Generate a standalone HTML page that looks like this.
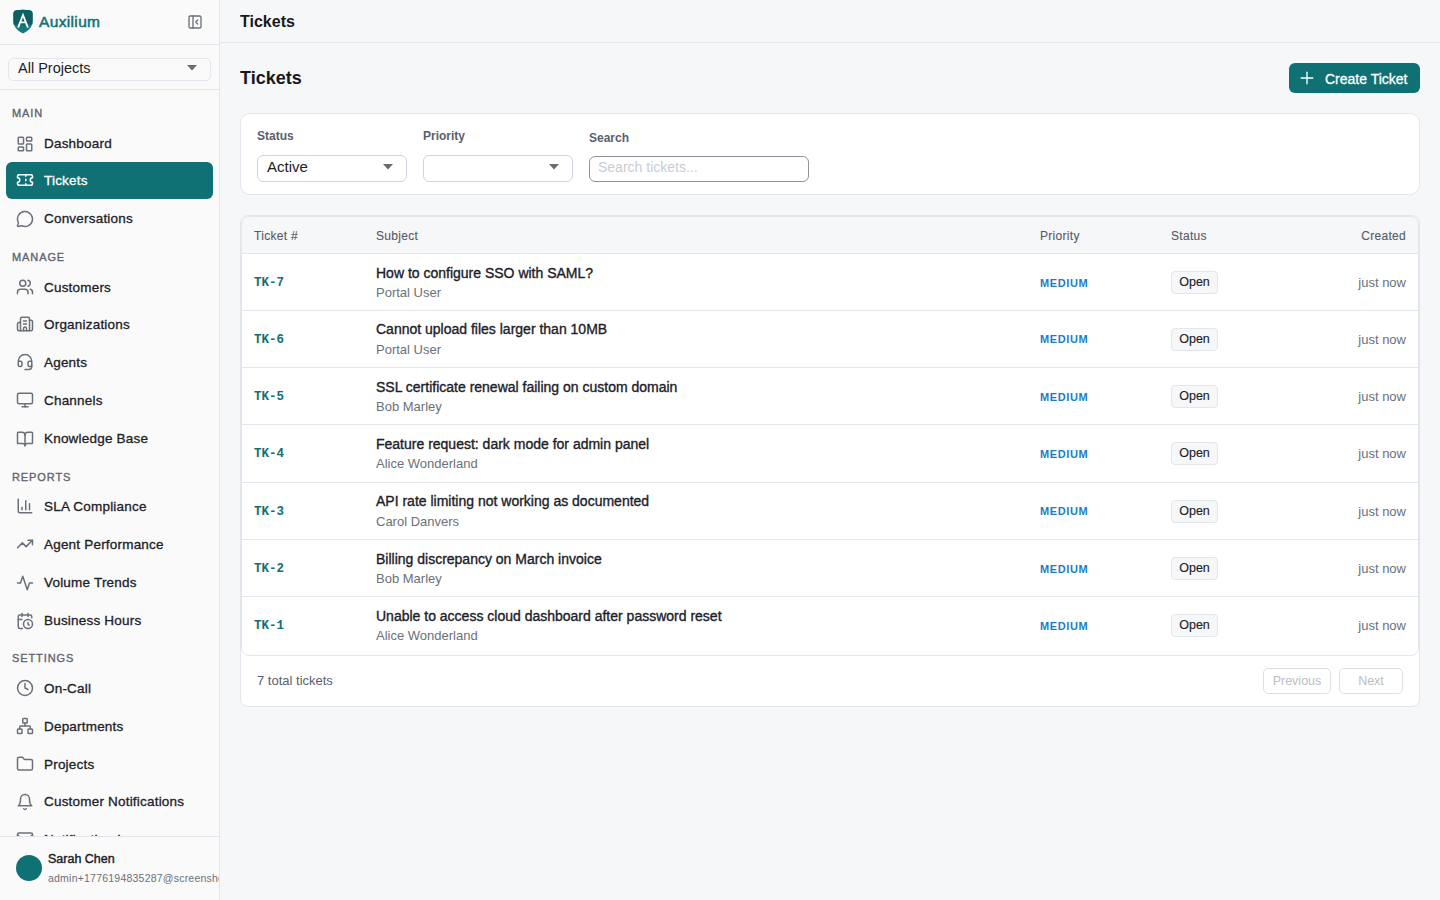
<!DOCTYPE html>
<html><head><meta charset="utf-8"><title>Tickets</title>
<style>
*{box-sizing:border-box;margin:0;padding:0}
html,body{width:1440px;height:900px;overflow:hidden}
body{font-family:"Liberation Sans",sans-serif;background:#f6f7f9;color:#1c2127;position:relative}
.abs{position:absolute}
svg.ic{position:absolute;fill:none;stroke:currentColor;stroke-width:2;stroke-linecap:round;stroke-linejoin:round}
/* sidebar */
#sb{position:absolute;left:0;top:0;width:220px;height:900px;background:#fafafa;border-right:1px solid #e3e7ed;overflow:hidden}
#sb .hdr{position:absolute;left:0;top:0;width:219px;height:45px;border-bottom:1px solid #e3e7ed}
#sb .brand{position:absolute;left:39px;top:11.5px;font-size:15.5px;font-weight:400;letter-spacing:0.35px;-webkit-text-stroke:0.5px currentColor;color:#0f7174;line-height:20px}
#sb .projsel{position:absolute;left:8px;top:58px;width:203px;height:23px;border:1px solid #e3e7ed;border-radius:5px;background:#fafafa;font-size:14.5px;color:#1c2127}
#sb .projsel span{position:absolute;left:9px;top:0px;line-height:18px}
#sb .sep{position:absolute;left:0;top:89px;width:219px;height:1px;background:#e3e7ed}
.lbl{position:absolute;left:12px;font-size:11px;font-weight:400;letter-spacing:0.9px;color:#5f656e;line-height:14px;-webkit-text-stroke:0.35px currentColor}
.it{position:absolute;left:6px;width:207px;height:36.5px;border-radius:6px;color:#1c2127}
.it span{position:absolute;left:38px;top:0.5px;line-height:36px;font-size:13.5px;letter-spacing:0.2px;white-space:nowrap;-webkit-text-stroke:0.3px currentColor}
.it svg{left:10px;top:9px;width:18px;height:18px;color:#6b7079}
.it.on{background:#0f7174;color:#fff}
.it.on svg{color:#fff}
#sb .foot{position:absolute;left:0;top:836px;width:219px;height:64px;border-top:1px solid #e3e7ed;background:#fafafa}
.avatar{position:absolute;left:16px;top:18px;width:26px;height:26px;border-radius:50%;background:#0f7174}
.uname{position:absolute;left:48px;top:14px;font-size:12.5px;font-weight:400;-webkit-text-stroke:0.4px currentColor;color:#1c2127;line-height:16px;white-space:nowrap}
.uemail{position:absolute;left:48px;top:33.5px;font-size:10.5px;letter-spacing:0.22px;color:#6b7079;line-height:14px;white-space:nowrap}
/* main */
#top{position:absolute;left:220px;top:0;width:1220px;height:43px;border-bottom:1px solid #e3e7ed}
#top .t{position:absolute;left:20px;top:12px;font-size:16px;font-weight:700;line-height:20px;color:#15191e}
.h1{position:absolute;left:240px;top:67px;font-size:18px;font-weight:700;line-height:22px;color:#15191e}
.btn{position:absolute;left:1289px;top:63px;width:131px;height:30px;border-radius:6px;background:#0f7174;color:#fff}
.btn span{position:absolute;left:36px;top:0.8px;line-height:30px;font-size:14px;-webkit-text-stroke:0.3px currentColor}
.btn svg{left:8px;top:5px;width:20px;height:20px;color:#fff;stroke-width:1.6}
.card{position:absolute;background:#fff;border:1px solid #e3e7ed;border-radius:10px}
.flab{position:absolute;font-size:12px;font-weight:700;color:#5a606b;line-height:14px}
.fs{position:absolute;height:27px;width:150px;border:1px solid #cfd5de;border-radius:6px;background:#fff;font-size:15px;color:#1c2127}
.fs span{position:absolute;left:9px;top:2px;line-height:18px}
.search{position:absolute;left:589px;top:156px;width:220px;height:26px;border:1px solid #8f949c;border-radius:6px;background:#fff}
.search span{position:absolute;left:8px;top:-2px;line-height:24px;font-size:14px;color:#c9cdd4}
/* table */
.thead{position:absolute;left:241px;top:216px;width:1178px;height:38px;background:#f6f7f9;border-bottom:1px solid #e3e7ed;border-radius:8px 8px 0 0}
.th{position:absolute;top:1.5px;line-height:37px;font-size:12px;color:#555b66;letter-spacing:0.3px;-webkit-text-stroke:0.1px currentColor}
.row{position:absolute;left:241px;width:1178px;height:57.3px;border-bottom:1px solid #e3e7ed;background:#fff}
.tk{position:absolute;left:13px;top:1px;line-height:56px;font-family:"Liberation Mono",monospace;font-weight:700;font-size:12.5px;color:#0f7174}
.subj{position:absolute;left:135px;top:9.8px;font-size:14px;line-height:18px;color:#1c2127;white-space:nowrap;-webkit-text-stroke:0.35px currentColor}
.who{position:absolute;left:135px;top:31px;font-size:13px;line-height:16px;color:#6b7079;white-space:nowrap}
.pri{position:absolute;left:799px;top:0.7px;line-height:57px;font-size:11px;font-weight:700;color:#1a7fc2;letter-spacing:0.6px}
.badge{position:absolute;left:930px;top:17px;width:47px;height:23px;border:1px solid #e3e6ea;border-radius:4px;background:#f6f7f9;font-size:12.5px;line-height:21px;text-align:center;color:#1c2127;-webkit-text-stroke:0.15px currentColor}
.ago{position:absolute;right:13px;top:0;line-height:57px;font-size:13px;color:#6b7079}
.tfoot{position:absolute;left:241px;top:655px;width:1178px;height:51px}
.total{position:absolute;left:16px;top:0;line-height:51px;font-size:13px;color:#5a606b}
.pbtn{position:absolute;top:13px;height:26px;border:1px solid #dcdfe4;border-radius:5px;font-size:12.5px;line-height:24px;text-align:center;color:#b9bdc4;background:#fff}
</style></head>
<body>
<div id="sb">
  <div class="hdr">
    <svg class="abs" style="left:12px;top:9px" width="22" height="26" viewBox="0 0 22 26">
      <path d="M4 1.2 Q11 0.4 18 1.2 Q20.6 1.6 20.6 4.2 L20.6 12 Q20.6 20 11 24.6 Q1.4 20 1.4 12 L1.4 4.2 Q1.4 1.6 4 1.2Z" fill="#14797d"/><path d="M4 1.2 Q11 0.4 18 1.2 Q20.6 1.6 20.6 4.2 L20.6 12 L20.45 15.5 L1.55 15.5 L1.4 12 L1.4 4.2 Q1.4 1.6 4 1.2Z" fill="#0f5e63"/>
      <path d="M6.1 18.6 L11 5.9 L15.9 18.6 M7.9 13.4 H14.1" fill="none" stroke="#fff" stroke-width="1.8" stroke-linejoin="miter"/>
    </svg>
    <div class="brand">Auxilium</div>
    <svg class="ic" style="left:187px;top:14px;width:16px;height:16px;color:#6b7079" viewBox="0 0 24 24"><rect width="18" height="18" x="3" y="3" rx="2"/><path d="M9 3v18"/><path d="m16 15-3-3 3-3"/></svg>
  </div>
  <div class="projsel"><span>All Projects</span><svg class="abs" style="right:13px;top:6px" width="10" height="6" viewBox="0 0 10 6"><path d="M0 0H10L5 5.5Z" fill="#6b6b6b"/></svg></div>
  <div class="sep"></div>

  <div class="lbl" style="top:106px">MAIN</div>
  <div class="it" style="top:125.6px"><svg class="ic" viewBox="0 0 24 24"><rect width="7" height="9" x="3" y="3" rx="1"/><rect width="7" height="5" x="14" y="3" rx="1"/><rect width="7" height="9" x="14" y="12" rx="1"/><rect width="7" height="5" x="3" y="16" rx="1"/></svg><span>Dashboard</span></div>
  <div class="it on" style="top:162.2px"><svg class="ic" viewBox="0 0 24 24"><path d="M2 9a3 3 0 0 1 0 6v2a2 2 0 0 0 2 2h16a2 2 0 0 0 2-2v-2a3 3 0 0 1 0-6V7a2 2 0 0 0-2-2H4a2 2 0 0 0-2 2Z"/><path d="M13 5v2"/><path d="M13 17v2"/><path d="M13 11v2"/></svg><span>Tickets</span></div>
  <div class="it" style="top:200.5px"><svg class="ic" viewBox="0 0 24 24"><path d="M2.992 16.342a2 2 0 0 1 .094 1.167l-1.065 3.29a1 1 0 0 0 1.236 1.168l3.413-.998a2 2 0 0 1 1.099.092 10 10 0 1 0-4.777-4.719"/></svg><span>Conversations</span></div>

  <div class="lbl" style="top:250px">MANAGE</div>
  <div class="it" style="top:269px"><svg class="ic" viewBox="0 0 24 24"><path d="M16 21v-2a4 4 0 0 0-4-4H6a4 4 0 0 0-4 4v2"/><circle cx="9" cy="7" r="4"/><path d="M22 21v-2a4 4 0 0 0-3-3.87"/><path d="M16 3.13a4 4 0 0 1 0 7.75"/></svg><span>Customers</span></div>
  <div class="it" style="top:306px"><svg class="ic" viewBox="0 0 24 24"><path d="M10 12h4"/><path d="M10 8h4"/><path d="M14 21v-3a2 2 0 0 0-4 0v3"/><path d="M6 10H4a2 2 0 0 0-2 2v7a2 2 0 0 0 2 2h16a2 2 0 0 0 2-2V9a2 2 0 0 0-2-2h-2"/><path d="M6 21V5a2 2 0 0 1 2-2h8a2 2 0 0 1 2 2v16"/></svg><span>Organizations</span></div>
  <div class="it" style="top:344.4px"><svg class="ic" viewBox="0 0 24 24"><path d="M3 11h3a2 2 0 0 1 2 2v3a2 2 0 0 1-2 2H5a2 2 0 0 1-2-2v-5Zm0 0a9 9 0 1 1 18 0m0 0v5a2 2 0 0 1-2 2h-1a2 2 0 0 1-2-2v-3a2 2 0 0 1 2-2h3Z"/><path d="M21 16v2a4 4 0 0 1-4 4h-5"/></svg><span>Agents</span></div>
  <div class="it" style="top:382.2px"><svg class="ic" viewBox="0 0 24 24"><rect width="20" height="14" x="2" y="3" rx="2"/><path d="M8 21h8"/><path d="M12 17v4"/></svg><span>Channels</span></div>
  <div class="it" style="top:420.6px"><svg class="ic" viewBox="0 0 24 24"><path d="M12 7v14"/><path d="M3 18a1 1 0 0 1-1-1V4a1 1 0 0 1 1-1h5a4 4 0 0 1 4 4 4 4 0 0 1 4-4h5a1 1 0 0 1 1 1v13a1 1 0 0 1-1 1h-6a3 3 0 0 0-3 3 3 3 0 0 0-3-3z"/></svg><span>Knowledge Base</span></div>

  <div class="lbl" style="top:470px">REPORTS</div>
  <div class="it" style="top:488px"><svg class="ic" viewBox="0 0 24 24"><path d="M3 3v16a2 2 0 0 0 2 2h16"/><path d="M18 17V9"/><path d="M13 17V5"/><path d="M8 17v-3"/></svg><span>SLA Compliance</span></div>
  <div class="it" style="top:526px"><svg class="ic" viewBox="0 0 24 24"><path d="M22 7 13.5 15.5 8.5 10.5 2 17"/><path d="M16 7h6v6"/></svg><span>Agent Performance</span></div>
  <div class="it" style="top:564.6px"><svg class="ic" viewBox="0 0 24 24"><path d="M22 12h-4l-3 9L9 3l-3 9H2"/></svg><span>Volume Trends</span></div>
  <div class="it" style="top:602.6px"><svg class="ic" viewBox="0 0 24 24"><path d="M21 7.5V6a2 2 0 0 0-2-2H5a2 2 0 0 0-2 2v14a2 2 0 0 0 2 2h3.5"/><path d="M16 2v4"/><path d="M8 2v4"/><path d="M3 10h5"/><path d="M17.5 17.5 16 16.3V14"/><circle cx="16" cy="16" r="6"/></svg><span>Business Hours</span></div>

  <div class="lbl" style="top:651px">SETTINGS</div>
  <div class="it" style="top:670.2px"><svg class="ic" viewBox="0 0 24 24"><circle cx="12" cy="12" r="10"/><path d="M12 6v6l4 2"/></svg><span>On-Call</span></div>
  <div class="it" style="top:708.2px"><svg class="ic" viewBox="0 0 24 24"><rect x="16" y="16" width="6" height="6" rx="1"/><rect x="2" y="16" width="6" height="6" rx="1"/><rect x="9" y="2" width="6" height="6" rx="1"/><path d="M5 16v-3a1 1 0 0 1 1-1h12a1 1 0 0 1 1 1v3"/><path d="M12 12V8"/></svg><span>Departments</span></div>
  <div class="it" style="top:746.1px"><svg class="ic" viewBox="0 0 24 24"><path d="M20 20a2 2 0 0 0 2-2V8a2 2 0 0 0-2-2h-7.9a2 2 0 0 1-1.69-.9L9.6 3.9A2 2 0 0 0 7.93 3H4a2 2 0 0 0-2 2v13a2 2 0 0 0 2 2Z"/></svg><span>Projects</span></div>
  <div class="it" style="top:783.5px"><svg class="ic" viewBox="0 0 24 24"><path d="M6 8a6 6 0 0 1 12 0c0 7 3 9 3 9H3s3-2 3-9"/><path d="M10.3 21a1.94 1.94 0 0 0 3.4 0"/></svg><span>Customer Notifications</span></div>
  <div class="it" style="top:821.2px"><svg class="ic" viewBox="0 0 24 24"><rect width="20" height="16" x="2" y="4" rx="2"/><path d="m22 7-8.97 5.7a1.94 1.94 0 0 1-2.06 0L2 7"/></svg><span>Notification Logs</span></div>

  <div class="foot">
    <div class="avatar"></div>
    <div class="uname">Sarah Chen</div>
    <div class="uemail">admin+1776194835287@screenshot.test</div>
  </div>
</div>

<div id="top"><div class="t">Tickets</div></div>
<div class="h1">Tickets</div>
<div class="btn"><svg class="ic" viewBox="0 0 24 24"><path d="M5 12h14"/><path d="M12 5v14"/></svg><span>Create Ticket</span></div>

<div class="card" style="left:240px;top:113px;width:1180px;height:82px"></div>
<div class="flab" style="left:257px;top:129px">Status</div>
<div class="fs" style="left:257px;top:155px"><span>Active</span><svg class="abs" style="right:13px;top:8px" width="10" height="6" viewBox="0 0 10 6"><path d="M0 0H10L5 5.5Z" fill="#6b6b6b"/></svg></div>
<div class="flab" style="left:423px;top:129px">Priority</div>
<div class="fs" style="left:423px;top:155px"><svg class="abs" style="right:13px;top:8px" width="10" height="6" viewBox="0 0 10 6"><path d="M0 0H10L5 5.5Z" fill="#6b6b6b"/></svg></div>
<div class="flab" style="left:589px;top:131px">Search</div>
<div class="search"><span>Search tickets...</span></div>

<div class="card" style="left:240px;top:215px;width:1180px;height:492px;border-radius:8px"></div>
<div class="thead">
  <div class="th" style="left:13px">Ticket #</div>
  <div class="th" style="left:135px">Subject</div>
  <div class="th" style="left:799px">Priority</div>
  <div class="th" style="left:930px">Status</div>
  <div class="th" style="right:13px">Created</div>
</div>
<div id="rows">
<div class="row" style="top:254px"><div class="tk">TK-7</div><div class="subj">How to configure SSO with SAML?</div><div class="who">Portal User</div><div class="pri">MEDIUM</div><div class="badge">Open</div><div class="ago">just now</div></div>
<div class="row" style="top:310.6px"><div class="tk">TK-6</div><div class="subj">Cannot upload files larger than 10MB</div><div class="who">Portal User</div><div class="pri">MEDIUM</div><div class="badge">Open</div><div class="ago">just now</div></div>
<div class="row" style="top:368px"><div class="tk">TK-5</div><div class="subj">SSL certificate renewal failing on custom domain</div><div class="who">Bob Marley</div><div class="pri">MEDIUM</div><div class="badge">Open</div><div class="ago">just now</div></div>
<div class="row" style="top:425.3px"><div class="tk">TK-4</div><div class="subj">Feature request: dark mode for admin panel</div><div class="who">Alice Wonderland</div><div class="pri">MEDIUM</div><div class="badge">Open</div><div class="ago">just now</div></div>
<div class="row" style="top:482.6px"><div class="tk">TK-3</div><div class="subj">API rate limiting not working as documented</div><div class="who">Carol Danvers</div><div class="pri">MEDIUM</div><div class="badge">Open</div><div class="ago">just now</div></div>
<div class="row" style="top:540px"><div class="tk">TK-2</div><div class="subj">Billing discrepancy on March invoice</div><div class="who">Bob Marley</div><div class="pri">MEDIUM</div><div class="badge">Open</div><div class="ago">just now</div></div>
<div class="row" style="top:597px;height:58px;border-bottom:none;border-radius:0 0 8px 8px"><div class="tk">TK-1</div><div class="subj">Unable to access cloud dashboard after password reset</div><div class="who">Alice Wonderland</div><div class="pri">MEDIUM</div><div class="badge">Open</div><div class="ago">just now</div></div>
</div>
<div class="abs" style="left:241px;top:216px;width:1178px;height:440px;border:1px solid #e3e7ed;border-radius:8px"></div>
<div class="tfoot">
  <div class="total">7 total tickets</div>
  <div class="pbtn" style="left:1022px;width:68px">Previous</div>
  <div class="pbtn" style="left:1098px;width:64px">Next</div>
</div>
</body></html>
